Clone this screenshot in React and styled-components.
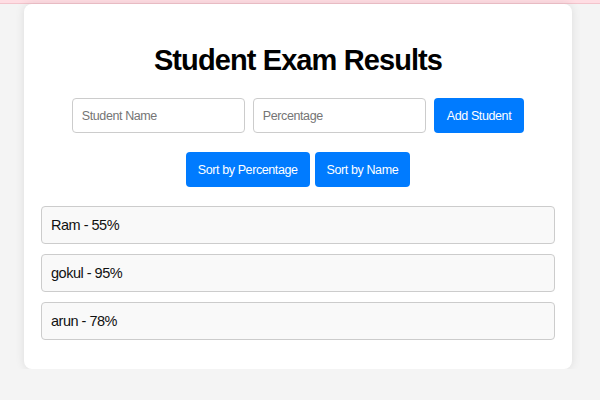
import styled, { createGlobalStyle } from "styled-components";
import { useState } from "react";

const GlobalStyle = createGlobalStyle`
  body {
    margin: 0;
    background-color: #f4f4f4;
    font-family: "Liberation Sans", Arial, sans-serif;
  }
`;

// Component Styles

const TopStrip = styled.div`
  height: 3px;
  background-color: #ffdde3;
  border-bottom: 1px solid #f3c4cc;
`;

const Card = styled.div`
  width: 514px;
  margin: 0 28px 0 24px;
  padding: 17px 17px 29px;
  background-color: white;
  border-radius: 8px;
  box-shadow: 0 0 10px rgba(0, 0, 0, 0.1);
  display: flex;
  flex-direction: column;
  align-items: center;
`;

const Title = styled.h1`
  margin: 21px 0 19px;
  font-size: 29px;
  line-height: 37px;
  letter-spacing: -0.9px;
  font-weight: bold;
  color: #000;
`;

const Row = styled.div`
  display: flex;
  gap: ${({ gap }) => gap}px;
  margin-bottom: 19px;
`;

const Input = styled.input`
  width: 173px;
  height: 35px;
  box-sizing: border-box;
  padding: 8px 9px;
  border: 1px solid #ccc;
  border-radius: 4px;
  font-family: inherit;
  font-size: 12.5px;
  letter-spacing: -0.4px;
  color: #333;
  &::placeholder {
    color: #757575;
  }
`;

const Button = styled.button`
  height: 35px;
  padding: 0 ${({ wide }) => (wide ? 13 : 12)}px;
  border: none;
  border-radius: 4px;
  background-color: #007bff;
  color: white;
  font-family: inherit;
  font-size: 12.5px;
  letter-spacing: -0.4px;
  cursor: pointer;
`;

const List = styled.ul`
  list-style: none;
  margin: 0;
  padding: 0;
  width: 100%;
  display: flex;
  flex-direction: column;
  gap: 10px;
`;

const Item = styled.li`
  padding: 9px;
  border: 1px solid #ccc;
  border-radius: 4px;
  background-color: #f9f9f9;
  font-size: 14.5px;
  line-height: 18px;
  letter-spacing: -0.5px;
  color: #111;
`;

function App() {
  const [students, setStudents] = useState([
    { name: "Ram", percentage: 55 },
    { name: "gokul", percentage: 95 },
    { name: "arun", percentage: 78 },
  ]);
  const [name, setName] = useState("");
  const [percentage, setPercentage] = useState("");

  const addStudent = () => {
    if (!name || percentage === "") return;
    setStudents((prev) => [...prev, { name, percentage: Number(percentage) }]);
    setName("");
    setPercentage("");
  };

  const sortByPercentage = () => {
    setStudents((prev) => [...prev].sort((a, b) => b.percentage - a.percentage));
  };

  const sortByName = () => {
    setStudents((prev) => [...prev].sort((a, b) => a.name.localeCompare(b.name)));
  };

  return (
    <>
      <GlobalStyle />
      <TopStrip />
      <Card>
        <Title>Student Exam Results</Title>
        <Row gap={8}>
          <Input
            placeholder="Student Name"
            value={name}
            onChange={(e) => setName(e.target.value)}
          />
          <Input
            placeholder="Percentage"
            value={percentage}
            onChange={(e) => setPercentage(e.target.value)}
          />
          <Button wide onClick={addStudent}>Add Student</Button>
        </Row>
        <Row gap={5}>
          <Button onClick={sortByPercentage}>Sort by Percentage</Button>
          <Button onClick={sortByName}>Sort by Name</Button>
        </Row>
        <List>
          {students.map((s, i) => (
            <Item key={i}>
              {s.name} - {s.percentage}%
            </Item>
          ))}
        </List>
      </Card>
    </>
  );
}

export default App;
